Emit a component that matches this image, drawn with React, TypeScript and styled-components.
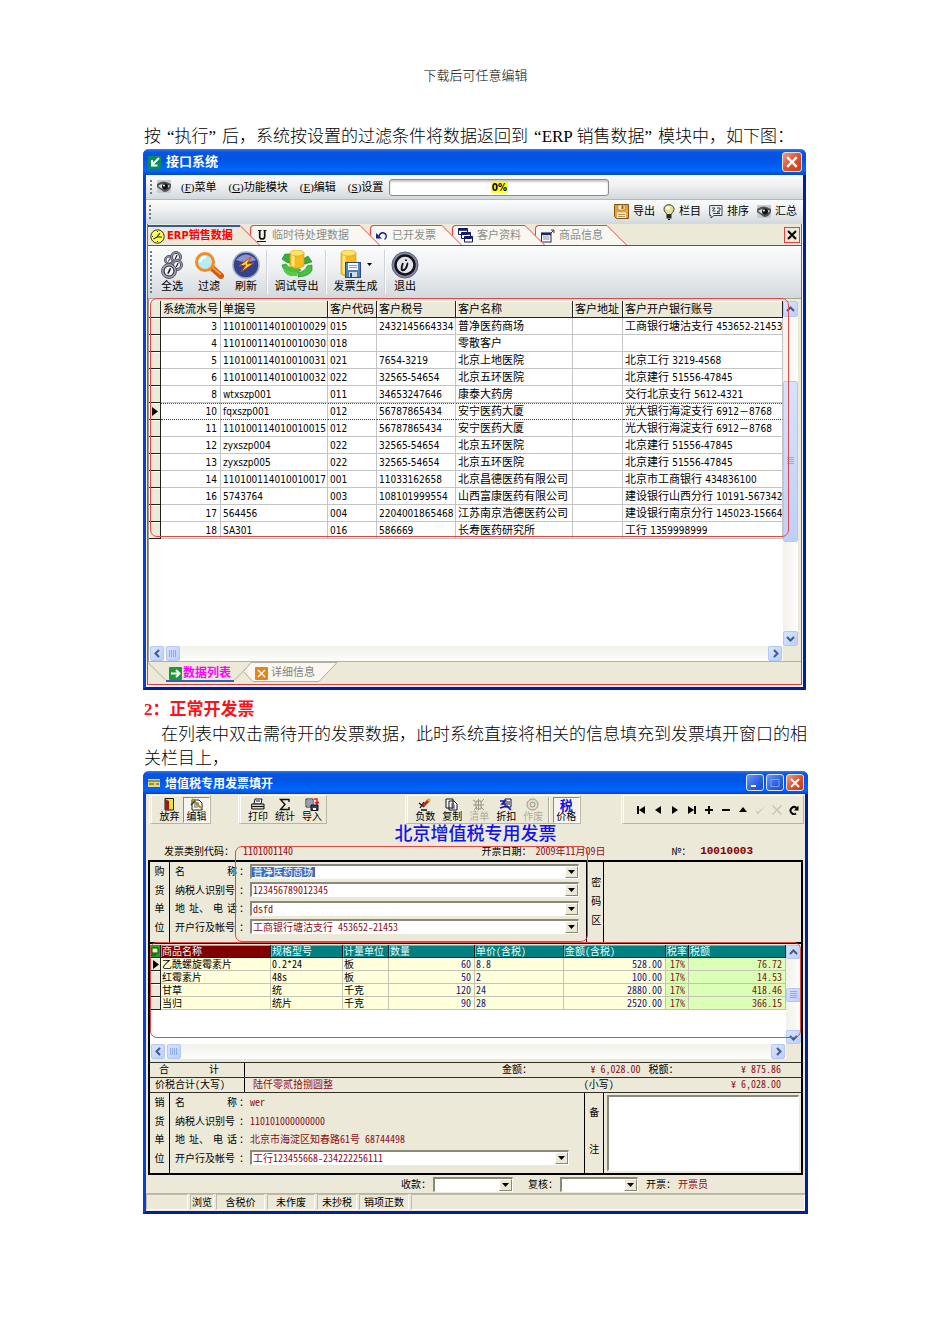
import React from 'react';
import styled, { createGlobalStyle, css } from 'styled-components';

const uiFont = '"DejaVu Sans Condensed", "Noto Sans CJK SC", sans-serif';
const formFont = '"Noto Sans CJK SC", sans-serif';

const GlobalStyle = createGlobalStyle`
  *, *::before, *::after { box-sizing: border-box; }
  body { margin: 0; background: #fff; color: #000; }
  button, select, textarea { font: inherit; color: inherit; margin: 0; padding: 0; border: 0; border-radius: 0; background: none; }
  svg { display: block; flex: none; }
`;

/* ---------- document ---------- */

const Page = styled.main`
  padding: 64px 142px 131px 143px;
  font-family: "Liberation Serif", "Noto Sans CJK SC", serif;
  font-size: 17px;
  line-height: 24px;
`;
const PageHeader = styled.header`
  text-align: center;
  font-size: 13px;
  font-weight: 300;
  margin-bottom: 37px;
`;
const Paragraph = styled.p<{ $indent?: boolean }>`
  margin: 0;
  padding-left: 1px;
  font-weight: 300;
  text-indent: ${p => (p.$indent ? '17px' : '0')};
`;
const OpenQuote = styled.span`
  padding-left: 6px;
`;
const CloseQuote = styled.span`
  padding-right: 6px;
`;
const Heading = styled.h2`
  margin: 8px 0 1px;
  padding-left: 1px;
  font-size: 17px;
  color: #f8141c;
`;

/* ---------- window frame ---------- */

const WindowFrame = styled.section<{ $narrow?: boolean }>`
  margin-right: ${p => (p.$narrow ? '2px' : '0')};
  border: solid #0a3fd0;
  border-width: 0 3px 3px;
  border-right-color: #0020a0;
  border-bottom-color: #0020a0;
  border-radius: 6px 6px 0 0;
  background: ${p => (p.$narrow ? '#f4f4fa' : '#ece9d8')};
  font-family: ${p => (p.$narrow ? uiFont : formFont)};
  font-size: ${p => (p.$narrow ? '11px' : '10px')};
  line-height: 14px;
  ${p => !p.$narrow && css`font-feature-settings: "hwid";`}
`;
const TitleBar = styled.div<{ $tall?: boolean }>`
  height: ${p => (p.$tall ? '26px' : '23px')};
  margin: 0 -3px;
  padding: 0 4px 0 5px;
  display: flex;
  align-items: center;
  gap: 5px;
  border-radius: 6px 6px 0 0;
  background: linear-gradient(#2f7df0 0, #0a55e0 12%, #0054e3 40%, #0066ff 82%, #0046c8 100%);
  color: #fff;
  font-size: ${p => (p.$tall ? '13px' : '12px')};
  font-weight: 700;
`;
const TitleText = styled.span`
  flex: 1;
`;
const CaptionButton = styled.button<{ $close?: boolean; $big?: boolean }>`
  width: ${p => (p.$big ? '20px' : '18px')};
  height: ${p => (p.$big ? '20px' : '17px')};
  margin-left: -3px;
  display: grid;
  place-items: center;
  border: 1px solid #dfe6fa;
  border-radius: 3px;
  background: ${p => (p.$close ? 'linear-gradient(135deg, #f0a088, #e0502c 50%, #c83c14)' : 'linear-gradient(135deg, #6c98f4, #2a5fe4 60%, #1c4ed0)')};
`;

const Cross = ({ size, color, width = 2 }: { size: number; color: string; width?: number }) => (
  <svg width={size} height={size} viewBox="0 0 10 10" stroke={color} strokeWidth={width} fill="none">
    <path d="M1 1L9 9M9 1L1 9" />
  </svg>
);

/* ---------- ERP window ---------- */

const silver = 'linear-gradient(#fbfcfc, #eef0f1 45%, #d2d9dd)';

const MenuBar = styled.nav`
  height: 25px;
  padding-left: 4px;
  display: flex;
  align-items: center;
  background: ${silver};
  border-bottom: 1px solid #b4b8ba;
`;
const MenuEye = styled.span`
  margin: 0 -2px 0 5px;
`;
const Grip = styled.span<{ $tall?: boolean }>`
  width: 2px;
  height: ${p => (p.$tall ? '42px' : '14px')};
  flex: none;
  background: repeating-linear-gradient(#707880 0 2px, transparent 2px 4px);
`;
const MenuItem = styled.button`
  margin-left: 12px;
  white-space: nowrap;
  font-family: "Liberation Serif", "Noto Sans CJK SC", serif;
`;
const Progress = styled.div`
  flex: 0 1 220px;
  height: 17px;
  margin-left: 6px;
  display: grid;
  place-items: center;
  border: 1px solid #8c8c8c;
  border-radius: 3px;
  background: #fff;
  box-shadow: inset 0 2px 2px #c8c8c8;
`;
const ProgressValue = styled.span`
  padding: 0 1px;
  line-height: 11px;
  font-size: 10px;
  font-weight: 700;
  background: #ffff30;
`;
const ActionBar = styled.div`
  height: 24px;
  padding: 0 6px 0 3px;
  display: flex;
  align-items: center;
  gap: 8px;
  background: ${silver};
  border-bottom: 1px solid #d8d8d0;
`;
const Spacer = styled.span`
  flex: 1;
`;
const ActionButton = styled.button`
  display: flex;
  align-items: center;
  gap: 4px;
  white-space: nowrap;
`;

const Panel = styled.div`
  margin: 0 1px 2px;
  border: solid #dc3c3c;
  border-width: 0 1px 1px;
  background: #ece9d8;
`;
const TabStrip = styled.div`
  height: 22px;
  padding: 1px 1px 0 0;
  display: flex;
  align-items: stretch;
  border-bottom: 1px solid #e02020;
`;
const Tab = styled.button<{ $width: number; $order: number; $active?: boolean }>`
  position: relative;
  z-index: ${p => p.$order};
  width: ${p => p.$width}px;
  margin-right: 10px;
  padding-left: ${p => (p.$active ? '2px' : '5px')};
  display: flex;
  align-items: center;
  gap: ${p => (p.$active ? '2px' : '4px')};
  white-space: nowrap;
  border: solid #f04040;
  border-width: ${p => (p.$active ? '2px 0 0 0' : '1px 0 0 1px')};
  border-top-color: ${p => (p.$active ? '#3458a8' : '#f04040')};
  border-radius: ${p => (p.$active ? '0' : '4px 0 0 0')};
  background: ${p => (p.$active ? '#ece9d8' : '#f8f7f2')};
  color: ${p => (p.$active ? '#f00' : '#8c8c88')};
  font-weight: ${p => (p.$active ? 700 : 400)};
`;
const TabSlope = styled.svg<{ $active?: boolean }>`
  position: absolute;
  left: 100%;
  top: ${p => (p.$active ? '-2px' : '-1px')};
`;
const CloseTab = styled.button`
  width: 16px;
  height: 16px;
  align-self: center;
  display: grid;
  place-items: center;
  border: 1px solid #e04040;
`;
const ToolRow = styled.div`
  height: 52px;
  padding-left: 2px;
  display: flex;
  align-items: center;
  background: ${silver};
`;
const ToolButton = styled.button<{ $width: number }>`
  width: ${p => p.$width}px;
  display: flex;
  flex-direction: column;
  align-items: center;
  gap: 1px;
  white-space: nowrap;
`;
const ToolSeparator = styled.span`
  width: 2px;
  height: 44px;
  background: #d0d4d8;
  border-right: 1px solid #fff;
`;
const IconLine = styled.span`
  display: flex;
  align-items: center;
  gap: 5px;
`;

const GridWrap = styled.div`
  position: relative;
  padding: 2px 3px 0 0;
  border-left: 1px solid #9c9a8c;
  border-top: 1px solid #a4a49c;
  border-bottom: 1px solid #b4b2a0;
`;
const Annotation = styled.span<{ $left: string; $right: string; $top: number; $height: number }>`
  position: absolute;
  z-index: 20;
  left: ${p => p.$left};
  right: ${p => p.$right};
  top: ${p => p.$top}px;
  height: ${p => p.$height}px;
  border: 1px solid #e04848;
  border-radius: 7px;
  pointer-events: none;
`;
const GridBody = styled.div<{ $height: number }>`
  display: flex;
  min-height: ${p => p.$height}px;
`;
const TableArea = styled.div`
  flex: 1;
  min-width: 0;
  background: #fff;
`;
const DataTable = styled.table`
  width: 100%;
  table-layout: fixed;
  border-collapse: separate;
  border-spacing: 0;
`;
const headFace = css`
  background: #ece9d8;
  border-right: 1px solid #202020;
  border-bottom: 1px solid #202020;
  box-shadow: inset 1px 1px 0 #fff;
`;
const HeadCell = styled.th`
  ${headFace}
  height: 17px;
  padding: 0 0 0 2px;
  line-height: 15px;
  font-weight: 400;
  text-align: left;
  white-space: nowrap;
`;
const Marker = styled.td`
  ${headFace}
  padding: 0 0 0 3px;
`;
const Cell = styled.td<{ $right?: boolean; $latin?: boolean; $current?: boolean }>`
  height: 17px;
  padding: ${p => (p.$right ? '0 3px 0 0' : '0 0 0 2px')};
  line-height: 15px;
  font-size: ${p => (p.$latin ? '10px' : '11px')};
  text-align: ${p => (p.$right ? 'right' : 'left')};
  white-space: nowrap;
  overflow: hidden;
  border-right: 1px solid #c4c4c4;
  border-bottom: 1px solid #c4c4c4;
  ${p => p.$current && css`
    border-bottom: 1px dotted #404040;
    background: repeating-linear-gradient(90deg, #505050 0 1px, #fff 1px 2px) top / 100% 1px no-repeat;
  `}
`;
const Digits = styled.span`
  font-size: 10px;
`;

/* ---------- scroll bars ---------- */

const VerticalTrack = styled.div<{ $rows: string }>`
  width: 15px;
  flex: none;
  display: grid;
  grid-template-rows: ${p => p.$rows};
  background: linear-gradient(90deg, #f2f1ea, #fdfdfb);
`;
const HorizontalTrack = styled.div`
  height: 15px;
  display: flex;
  gap: 2px;
  margin-right: 15px;
  padding: 0 1px;
  background: linear-gradient(#f2f1ea, #fdfdfb);
`;
const ScrollPart = styled.button`
  min-width: 14px;
  min-height: 14px;
  display: grid;
  place-items: center;
  border: 1px solid #b4c8f4;
  border-radius: 2px;
  background: linear-gradient(135deg, #d8e4fe, #bccffa);
`;
const arrowPaths = {
  up: 'M1 6L4.5 2.5L8 6',
  down: 'M1 3L4.5 6.5L8 3',
  left: 'M6 1L2.5 4.5L6 8',
  right: 'M3 1L6.5 4.5L3 8',
};
const ScrollArrow = ({ dir }: { dir: keyof typeof arrowPaths }) => (
  <ScrollPart aria-label={dir}>
    <svg width="9" height="9" viewBox="0 0 9 9" fill="none" stroke="#42598c" strokeWidth="2"><path d={arrowPaths[dir]} /></svg>
  </ScrollPart>
);
const Thumb = ({ vertical }: { vertical?: boolean }) => (
  <ScrollPart aria-label="scroll">
    <svg width="8" height="8" viewBox="0 0 8 8" stroke="#8caaf0">
      <path d={vertical ? 'M0 .5H7M0 2.5H7M0 4.5H7M0 6.5H7' : 'M.5 0V7M2.5 0V7M4.5 0V7M6.5 0V7'} />
    </svg>
  </ScrollPart>
);

const BottomTabs = styled.div`
  height: 22px;
  display: flex;
`;
const BottomTab = styled.button<{ $active?: boolean }>`
  position: relative;
  width: ${p => (p.$active ? '104px' : '96px')};
  margin-right: ${p => (p.$active ? '-9px' : '0')};
  padding-left: ${p => (p.$active ? '21px' : '12px')};
  display: flex;
  align-items: center;
  gap: ${p => (p.$active ? '1px' : '3px')};
  white-space: nowrap;
  color: ${p => (p.$active ? '#f0f' : '#84847c')};
  font-size: ${p => (p.$active ? '12px' : '11px')};
  font-weight: ${p => (p.$active ? 700 : 400)};
  & > * { position: relative; }
`;
const TabShape = styled.svg`
  && { position: absolute; left: 0; top: 0; }
`;

/* ---------- ERP icons ---------- */

const EyeIcon = () => (
  <svg width="14" height="14" viewBox="0 0 14 14">
    <rect width="14" height="13" fill="#c8ccd0" />
    <path d="M0 4Q6 -1 14 4V7Q12 12 7 12Q3 9 0 7Z" fill="#505458" />
    <path d="M1 6Q6 2 13 6Q8 11 4 8Z" fill="#d8dcdc" />
    <circle cx="8" cy="6.500" r="3" fill="#101010" />
    <circle cx="7" cy="5.500" r="1" fill="#fff" />
  </svg>
);
const FloppyIcon = () => (
  <svg width="15" height="15" viewBox="0 0 15 15">
    <path d="M.5 .5H14.500V14.500H2.500L.5 12.500Z" fill="#e8a438" stroke="#845010" />
    <rect x="4" y="1" width="7" height="5" fill="#fff4d0" stroke="#a06820" strokeWidth=".6" />
    <rect x="7.500" y="1.500" width="2" height="3.500" fill="#905c18" />
    <rect x="3" y="8.500" width="9" height="5.500" fill="#f8f4e8" />
    <path d="M4 10.500H11M4 12.500H11" stroke="#a89468" />
  </svg>
);
const BulbIcon = () => (
  <svg width="12" height="16" viewBox="0 0 12 16">
    <path d="M6 .7C2.500 .7 .8 3.200 1 5.500C1.200 8 3.500 8.500 3.700 10.500H8.300C8.500 8.500 10.800 8 11 5.500C11.200 3.200 9.500 .7 6 .7Z" fill="#e0e098" stroke="#404018" />
    <ellipse cx="5" cy="4" rx="2" ry="2" fill="#fffff0" />
    <rect x="3.500" y="10.500" width="5" height="4" fill="#282828" />
    <path d="M5 15.500H7" stroke="#000" />
  </svg>
);
const SortIcon = () => (
  <svg width="14" height="15" viewBox="0 0 14 15" fill="none" stroke="#38404c">
    <path d="M1.500 1.500H13V11.500H5L2 14V11.500H.7V1.500Z" fill="#e8f0f4" />
    <path d="M3 4H6L3.500 7H6.500M8 4H11V6L8 8H11M4 9.500H11" />
  </svg>
);
const ClockIcon = () => (
  <svg width="15" height="15" viewBox="0 0 15 15">
    <circle cx="7.500" cy="7.500" r="6.700" fill="#ffff50" stroke="#303030" />
    <path d="M3.500 10L7 8H12M7 8L10 4" fill="none" stroke="#282828" strokeWidth="1.200" />
    <path d="M7.500 2V3M2 7.500H3M7.500 12V13" stroke="#202020" />
  </svg>
);
const UnderlineIcon = () => (
  <svg width="12" height="14" viewBox="0 0 12 14" fill="none" stroke="#101010">
    <path d="M2 1.500H5.500M7.500 1.500H10.500M1 12.500H10" />
    <path d="M3.700 1V7.500C3.700 9.500 4.500 10 6 10C8 10 8.700 9.500 8.700 7.500V1" strokeWidth="1.700" />
  </svg>
);
const UndoIcon = () => (
  <svg width="12" height="12" viewBox="0 0 12 12">
    <path d="M3 6C4 3 6 2.500 8 3C11 4 11 8 8.500 9.500" fill="none" stroke="#102888" strokeWidth="1.400" />
    <path d="M0 3V8.500H6Z" fill="#102888" />
  </svg>
);
const CascadeIcon = () => (
  <svg width="15" height="15" viewBox="0 0 15 15" stroke="#101868" fill="#fff">
    <path d="M.5 .5H9.500V6.500H.5ZM3.500 4.500H12.500V10.500H3.500ZM6.500 8.500H14.500V14H6.500Z" />
    <path d="M.5 1.500H9.500M3.500 5.500H12.500M6.500 9.500H14.500" strokeWidth="2.400" />
  </svg>
);
const FormIcon = () => (
  <svg width="14" height="14" viewBox="0 0 14 14" fill="none">
    <rect x=".5" y="4" width="9.500" height="9" fill="#fff" stroke="#202860" />
    <path d="M.5 5H10" stroke="#202860" strokeWidth="2.400" />
    <path d="M2 8H8.500M2 10H8.500" stroke="#888" />
    <path d="M13 4V1H10M9 5L12.500 1.500" stroke="#801818" />
  </svg>
);
const GreenArrowIcon = ({ back }: { back?: boolean }) => (
  <svg width="13" height="13" viewBox="0 0 13 13" fill="none" stroke="#fff" strokeWidth="2">
    <rect width="13" height="13" rx="1" fill={back ? '#088c60' : '#209838'} stroke="none" />
    <path d={back ? 'M11 2L5 8M4 4V9.500H9.500' : 'M2 6.500H10M7 3L10.500 6.500L7 10'} />
  </svg>
);
const OrangeCrossIcon = () => (
  <svg width="13" height="13" viewBox="0 0 13 13">
    <rect width="13" height="13" rx="1" fill="#e48420" />
    <path d="M3 3L10 10M10 3L3 10" stroke="#fff4e0" strokeWidth="1.500" />
  </svg>
);

const Badge = ({ x, y, r }: { x: number; y: number; r: number }) => (
  <g transform={`translate(${x} ${y})`}>
    <circle r={r} fill="#a0a4b4" stroke="#50546c" />
    <circle r={r * 0.66} fill="#f4f4f8" stroke="#202028" strokeWidth={r * 0.14} />
    <path d={`M${-r * 0.15} ${r * 0.35}L${r * 0.2} ${-r * 0.35}`} stroke="#101018" strokeWidth={r * 0.2} />
  </g>
);
const SelectAllIcon = () => (
  <svg width="24" height="28" viewBox="0 0 24 28">
    <Badge x={9} y={9} r={4.500} /><Badge x={16} y={6} r={5.500} /><Badge x={17} y={14} r={5.500} /><Badge x={9} y={20} r={7.500} />
  </svg>
);
const SearchIcon = () => (
  <svg width="30" height="28" viewBox="0 0 30 28">
    <path d="M17 16L27 25" stroke="#d45810" strokeWidth="6" strokeLinecap="round" />
    <path d="M17 15L26 23" stroke="#fc9440" strokeWidth="2" strokeLinecap="round" />
    <circle cx="11" cy="11" r="8.500" fill="#b8ecf8" stroke="#f08c20" strokeWidth="3" />
    <path d="M6 11Q7 6 12 6" stroke="#fff" strokeWidth="2.500" fill="none" />
  </svg>
);
const RefreshIcon = () => (
  <svg width="28" height="28" viewBox="0 0 28 28">
    <circle cx="14" cy="14" r="13" fill="#34448c" stroke="#a4acc4" strokeWidth="1.500" />
    <path d="M4 9Q14 -2 24 9Q14 13 4 9Z" fill="#8898cc" />
    <path d="M19 6L7 15L14 14L9 21L22 12L15 13Z" fill="#ffdc28" stroke="#e03418" />
  </svg>
);
const Cylinder = ({ x, y, w, h }: { x: number; y: number; w: number; h: number }) => (
  <g>
    <path d={`M${x} ${y + 3}V${y + h - 3}Q${x + w / 2} ${y + h + 2} ${x + w} ${y + h - 3}V${y + 3}Z`} fill="#f4bc20" stroke="#d09410" strokeWidth=".6" />
    <path d={`M${x + 3} ${y + 5}V${y + h - 3}`} stroke="#ffe880" strokeWidth="3" />
    <ellipse cx={x + w / 2} cy={y + 3} rx={w / 2} ry="3" fill="#ffe468" stroke="#d8a018" strokeWidth=".6" />
  </g>
);
const DebugExportIcon = () => (
  <svg width="32" height="29" viewBox="0 0 32 29">
    <path d="M9 4H4L1 9L5 12Q17 17 31 12L27 6L22 9Q15 11 8 9Z" fill="#38b038" stroke="#188018" strokeWidth=".6" />
    <path d="M1 15Q2 22 12 23V26L20 20L12 15V18Q7 18 5 14ZM31 15V20Q29 26 17 27V23Q25 21 26 16Z" fill="#48c040" stroke="#188018" strokeWidth=".6" />
    <Cylinder x={9} y={0} w={14} h={19} />
    <path d="M2 18Q8 23 16 22V26L9 26Q3 24 2 18Z" fill="#58cc48" />
  </svg>
);
const InvoiceIcon = () => (
  <svg width="22" height="29" viewBox="0 0 22 29">
    <Cylinder x={1} y={0} w={15} h={27} />
    <rect x="5.500" y="12.500" width="15" height="15" fill="#5080b8" stroke="#284878" />
    <rect x="8" y="13" width="10" height="7" fill="#f4f8fc" />
    <path d="M9 15.500H17M9 17.500H17" stroke="#e09030" />
    <rect x="9" y="22" width="8" height="5" fill="#d4dce4" />
    <rect x="10" y="23" width="2" height="4" fill="#284878" />
  </svg>
);
const ExitIcon = () => (
  <svg width="28" height="28" viewBox="0 0 28 28">
    <circle cx="14" cy="14" r="13" fill="#84889c" stroke="#5c6080" />
    <circle cx="14" cy="14" r="9.500" fill="#e4e4ec" stroke="#14141c" strokeWidth="2.500" />
    <path d="M12 12Q10 17 11 19Q13 20 15 17Q17 13 16 12M15 8.500V10" fill="none" stroke="#14141c" strokeWidth="2" />
  </svg>
);

/* ---------- ERP data ---------- */

type SaleRow = [string, string, string, string, string, string, string];
const saleRows: SaleRow[] = [
  ['3', '110100114010010029', '015', '2432145664334', '普净医药商场', '工商银行塘沽支行', '453652-21453'],
  ['4', '110100114010010030', '018', '', '零散客户', '', ''],
  ['5', '110100114010010031', '021', '7654-3219', '北京上地医院', '北京工行', '3219-4568'],
  ['6', '110100114010010032', '022', '32565-54654', '北京五环医院', '北京建行', '51556-47845'],
  ['8', 'wtxszp001', '011', '34653247646', '康泰大药房', '交行北京支行', '5612-4321'],
  ['10', 'fqxszp001', '012', '56787865434', '安宁医药大厦', '光大银行海淀支行', '6912－8768'],
  ['11', '110100114010010015', '012', '56787865434', '安宁医药大厦', '光大银行海淀支行', '6912－8768'],
  ['12', 'zyxszp004', '022', '32565-54654', '北京五环医院', '北京建行', '51556-47845'],
  ['13', 'zyxszp005', '022', '32565-54654', '北京五环医院', '北京建行', '51556-47845'],
  ['14', '110100114010010017', '001', '11033162658', '北京昌德医药有限公司', '北京市工商银行', '434836100'],
  ['16', '5743764', '003', '108101999554', '山西富康医药有限公司', '建设银行山西分行', '10191-567342'],
  ['17', '564456', '004', '2204001865468', '江苏南京浩德医药公司', '建设银行南京分行', '145023-15664'],
  ['18', 'SA301', '016', '586669', '长寿医药研究所', '工行', '1359998999'],
];

const RowPointer = () => (
  <svg width="6" height="9" viewBox="0 0 6 9"><path d="M0 0L6 4.500L0 9Z" /></svg>
);

const pageTabs = [
  { label: 'ERP销售数据', width: 92, icon: <ClockIcon />, active: true },
  { label: '临时待处理数据', width: 110, icon: <UnderlineIcon /> },
  { label: '已开发票', width: 72, icon: <UndoIcon /> },
  { label: '客户资料', width: 73, icon: <CascadeIcon /> },
  { label: '商品信息', width: 72, icon: <FormIcon /> },
];

const menus = [['F', '菜单'], ['G', '功能模块'], ['E', '编辑'], ['S', '设置']];

const ErpWindow = () => (
  <WindowFrame $narrow>
    <TitleBar $tall>
      <GreenArrowIcon back />
      <TitleText>接口系统</TitleText>
      <CaptionButton $close $big aria-label="关闭"><Cross size={12} color="#fff" /></CaptionButton>
    </TitleBar>
    <MenuBar>
      <Grip />
      <MenuEye><EyeIcon /></MenuEye>
      {menus.map(([key, label]) => (
        <MenuItem key={key}>(<u>{key}</u>){label}</MenuItem>
      ))}
      <Progress role="progressbar" aria-valuenow={0}><ProgressValue>0%</ProgressValue></Progress>
    </MenuBar>
    <ActionBar>
      <Grip />
      <Spacer />
      <ActionButton><FloppyIcon />导出</ActionButton>
      <ActionButton><BulbIcon />栏目</ActionButton>
      <ActionButton><SortIcon />排序</ActionButton>
      <ActionButton><EyeIcon />汇总</ActionButton>
    </ActionBar>
    <Panel>
      <TabStrip>
        {pageTabs.map((tab, i) => (
          <Tab key={tab.label} $width={tab.width} $order={10 - i} $active={tab.active}>
            {tab.icon}
            {tab.label}
            <TabSlope $active={tab.active} width="21" height="20" viewBox="0 0 21 20">
              <path d="M0 0L20 20H0Z" fill={tab.active ? '#ece9d8' : '#f8f7f2'} />
              <path d="M0 .5L20 20.500" stroke="#f04040" />
            </TabSlope>
          </Tab>
        ))}
        <Spacer />
        <CloseTab aria-label="关闭标签"><Cross size={10} color="#000" /></CloseTab>
      </TabStrip>
      <ToolRow>
        <Grip $tall />
        <ToolButton $width={40}><SelectAllIcon />全选</ToolButton>
        <ToolButton $width={34}><SearchIcon />过滤</ToolButton>
        <ToolButton $width={40}><RefreshIcon />刷新</ToolButton>
        <ToolSeparator />
        <ToolButton $width={57}><DebugExportIcon />调试导出</ToolButton>
        <ToolSeparator />
        <ToolButton $width={57}>
          <IconLine>
            <InvoiceIcon />
            <svg width="5" height="3" viewBox="0 0 5 3"><path d="M0 0H5L2.500 3Z" /></svg>
          </IconLine>
          发票生成
        </ToolButton>
        <ToolSeparator />
        <ToolButton $width={38}><ExitIcon />退出</ToolButton>
      </ToolRow>
      <GridWrap>
        <GridBody $height={345}>
          <TableArea>
            <DataTable>
              <colgroup>
                <col width="12" /><col width="60" /><col width="107" /><col width="49" /><col width="79" /><col width="117" /><col width="50" /><col />
              </colgroup>
              <thead>
                <tr>
                  {['', '系统流水号', '单据号', '客户代码', '客户税号', '客户名称', '客户地址', '客户开户银行账号'].map(h => <HeadCell key={h}>{h}</HeadCell>)}
                </tr>
              </thead>
              <tbody>
                {saleRows.map(([id, doc, code, tax, name, bank, account]) => {
                  const current = id === '10';
                  return (
                    <tr key={id}>
                      <Marker>{current && <RowPointer />}</Marker>
                      <Cell $right $latin $current={current}>{id}</Cell>
                      <Cell $latin $current={current}>{doc}</Cell>
                      <Cell $latin $current={current}>{code}</Cell>
                      <Cell $latin $current={current}>{tax}</Cell>
                      <Cell $current={current}>{name}</Cell>
                      <Cell $current={current} />
                      <Cell $current={current}>{bank} <Digits>{account}</Digits></Cell>
                    </tr>
                  );
                })}
              </tbody>
            </DataTable>
          </TableArea>
          <VerticalTrack $rows="16px 64fr 160fr 89fr 15px">
            <ScrollArrow dir="up" />
            <span />
            <Thumb vertical />
            <span />
            <ScrollArrow dir="down" />
          </VerticalTrack>
        </GridBody>
        <HorizontalTrack>
          <ScrollArrow dir="left" />
          <Thumb />
          <Spacer />
          <ScrollArrow dir="right" />
        </HorizontalTrack>
        <Annotation $left="1px" $right="12px" $top={-1} $height={239} />
      </GridWrap>
      <BottomTabs>
        <BottomTab $active>
          <TabShape width="104" height="21" viewBox="0 0 104 21">
            <path d="M0 .5L18 18.500H86L104 .5" fill="#ece9d8" stroke="#b0ae9c" />
            <rect x="18" y="18" width="68" height="2" fill="#3060b8" />
          </TabShape>
          <GreenArrowIcon />
          <span>数据列表</span>
        </BottomTab>
        <BottomTab>
          <TabShape width="96" height="21" viewBox="0 0 96 21">
            <path d="M8 .5L.5 9.500L10 19.500H76L94 .5Z" fill="#f8f7f0" stroke="#b0ae9c" />
          </TabShape>
          <OrangeCrossIcon />
          <span>详细信息</span>
        </BottomTab>
      </BottomTabs>
    </Panel>
  </WindowFrame>
);

/* ---------- invoice window ---------- */

const FormTools = styled.div`
  height: 30px;
  padding: 1px 1px 0 3px;
  display: flex;
  justify-content: space-between;
`;
const FormGroup = styled.div<{ $end?: boolean }>`
  height: 29px;
  padding: ${p => (p.$end ? '1px 1px 0 8px' : '1px 0 0 4px')};
  display: flex;
  align-items: stretch;
  border: 1px solid #b8b4a0;
  border-top-color: #fff;
  border-left: 3px double #fff;
`;
const FormButton = styled.button<{ $pressed?: boolean; $disabled?: boolean }>`
  width: 27px;
  display: flex;
  flex-direction: column;
  align-items: center;
  justify-content: flex-start;
  line-height: 10px;
  white-space: nowrap;
  color: ${p => (p.$disabled ? '#b0ad9c' : '#000')};
  border: 1px solid ${p => (p.$pressed ? '#fff' : 'transparent')};
  ${p => p.$pressed && css`background: #f6f4ec; border-top-color: #908c7c; border-left-color: #908c7c;`}
`;
const FormSeparator = styled.span`
  width: 2px;
  margin: 0 3px 0 1px;
  background: #b0ac9c;
  border-right: 1px solid #fff;
`;
const NavButton = styled.button`
  width: 17px;
  display: grid;
  place-items: center;
`;
const InvoiceTitle = styled.h3`
  margin: 0;
  height: 17px;
  line-height: 16px;
  text-align: center;
  font-size: 18px;
  font-weight: 500;
  color: #1414e8;
`;
const InfoRow = styled.div`
  height: 19px;
  padding: 0 52px 0 18px;
  display: grid;
  grid-template-columns: 318fr 190fr auto;
  align-items: center;
  line-height: 12px;
`;
const InfoItem = styled.span<{ $tight?: boolean }>`
  display: flex;
  gap: ${p => (p.$tight ? '4px' : '9px')};
  white-space: nowrap;
`;
const Value = styled.span`
  color: #8c0c18;
`;
const InvoiceNumber = styled.strong`
  font-family: "Liberation Mono", monospace;
  font-size: 11px;
  color: #800000;
`;
const Sheet = styled.div`
  position: relative;
  margin: 0 2px;
  border: 2px solid #000;
`;
const Party = styled.div<{ $columns: string }>`
  height: 80px;
  display: grid;
  grid-template-columns: ${p => p.$columns};
`;
const SideTitle = styled.div<{ $leftLine?: boolean }>`
  display: flex;
  flex-direction: column;
  align-items: center;
  justify-content: space-around;
  padding: 0 0 6px;
  border-right: 1px solid #000;
  ${p => p.$leftLine && css`border-left: 1px solid #000;`}
`;
const CipherTitle = styled(SideTitle)`
  padding: 10px 0 12px 2px;
`;
const Fields = styled.div`
  display: grid;
  grid-template-rows: repeat(4, 1fr);
  padding: 0 7px 6px 5px;
`;
const FieldRow = styled.div`
  display: flex;
  align-items: center;
`;
const FieldLabel = styled.label`
  width: 62px;
  display: flex;
  justify-content: space-between;
  white-space: nowrap;
`;
const Colon = styled.span`
  width: 13px;
  padding-left: 2px;
`;
const ComboBox = styled.div<{ $width?: number }>`
  position: relative;
  ${p => (p.$width ? css`width: ${p.$width}px;` : css`flex: 1;`)}
  height: 15px;
  background: #fff;
  border: 1px solid #fff;
  border-top: 2px solid #8c8878;
  border-left: 2px solid #8c8878;
`;
const Select = styled.select<{ $selected?: boolean }>`
  appearance: none;
  display: block;
  width: 100%;
  height: 12px;
  padding: 0 14px 0 1px;
  line-height: 12px;
  outline: 0;
  color: ${p => (p.$selected ? '#fff' : '#8c0c18')};
  ${p => p.$selected && css`background: linear-gradient(#3c6cc0, #3c6cc0) 0 1px / 63px 10px no-repeat;`}
`;
const DropArrow = styled.span`
  position: absolute;
  top: 0;
  right: 0;
  width: 13px;
  height: 12px;
  display: grid;
  place-items: center;
  pointer-events: none;
  background: #ece9d8;
  border: 1px solid #8c8878;
  border-top-color: #fff;
  border-left-color: #fff;
`;
const ItemsWrap = styled.div`
  position: relative;
  border-top: 2px solid #000;
  padding: 1px 0 3px;
`;
const ItemHead = styled.th<{ $first?: boolean }>`
  height: 13px;
  padding: 0 0 0 1px;
  line-height: 12px;
  font-weight: 400;
  text-align: left;
  white-space: nowrap;
  color: #e8ffff;
  background: ${p => (p.$first ? '#800000' : '#008080')};
  border-right: 1px solid #202020;
  border-bottom: 1px solid #202020;
  box-shadow: inset 1px 1px 0 #70b0b0;
`;
const CornerHead = styled.th`
  padding: 0;
  background: #20a028;
  border-right: 1px solid #202020;
  border-bottom: 1px solid #202020;
`;
const ItemCell = styled.td<{ $tone?: 'number' | 'tax'; $right?: boolean }>`
  height: 13px;
  padding: 0 3px 0 1px;
  line-height: 12px;
  white-space: nowrap;
  text-align: ${p => (p.$right ? 'right' : 'left')};
  color: ${p => (p.$tone === 'number' ? '#14147c' : p.$tone === 'tax' ? '#801410' : '#000')};
  background: ${p => (p.$tone === 'tax' ? '#dcffb8' : '#ffffdc')};
  border-right: 1px solid #c4c4b4;
  border-bottom: 1px solid #c4c4b4;
`;
const TotalRow = styled.div`
  height: 15px;
  display: grid;
  grid-template-columns: 95px 250fr 82fr 65fr 141fr 20px;
  align-items: stretch;
  line-height: 12px;
  white-space: nowrap;
  border-top: 1px solid #303028;
`;
const TotalLabel = styled.span<{ $spread?: boolean }>`
  padding: 0 ${p => (p.$spread ? '25px' : '0')} 0 ${p => (p.$spread ? '9px' : '5px')};
  display: flex;
  justify-content: ${p => (p.$spread ? 'space-between' : 'flex-start')};
  border-right: 1px solid #000;
`;
const TotalCell = styled.span<{ $red?: boolean; $right?: boolean }>`
  padding-left: 8px;
  text-align: ${p => (p.$right ? 'right' : 'left')};
  color: ${p => (p.$red ? '#8c0c18' : '#000')};
`;
const TaxTotal = styled(TotalCell)`
  display: flex;
  justify-content: space-between;
`;
const TaxLabel = styled.span`
  color: #000;
`;
const SellerParty = styled(Party)`
  height: 81px;
  border-top: 1px solid #303028;
`;
const SellerFields = styled(Fields)`
  padding-right: 15px;
`;
const NotesCell = styled.div`
  padding: 2px 2px 2px 3px;
  display: flex;
`;
const Notes = styled.textarea`
  flex: 1;
  min-width: 0;
  resize: none;
  background: #fff;
  border: 1px solid #fff;
  border-top: 2px solid #8c8878;
  border-left: 2px solid #8c8878;
`;
const SignRow = styled.div`
  height: 18px;
  padding-left: 255px;
  display: flex;
  align-items: center;
  line-height: 12px;
  white-space: nowrap;
`;
const SignLabel = styled.label<{ $gap?: boolean }>`
  margin-left: ${p => (p.$gap ? '15px' : '0')};
  width: 32px;
`;
const SignText = styled.span`
  margin-left: 8px;
  width: 32px;
`;
const StatusBar = styled.footer`
  height: 18px;
  display: flex;
  gap: 2px;
  padding-bottom: 1px;
  border-top: 1px solid #b8b4a4;
`;
const StatusCell = styled.span<{ $width?: number }>`
  ${p => (p.$width ? css`width: ${p.$width}px;` : css`flex: 1;`)}
  line-height: 13px;
  text-align: center;
  white-space: nowrap;
  border: 1px solid #fff;
  border-top-color: #c0bcac;
  border-left-color: #c0bcac;
`;

const Combo = ({ id, text = '', selected, width }: { id: string; text?: string; selected?: boolean; width?: number }) => (
  <ComboBox $width={width}>
    <Select id={id} $selected={selected}><option>{text}</option></Select>
    <DropArrow><svg width="7" height="4" viewBox="0 0 7 4"><path d="M0 0H7L3.500 4Z" /></svg></DropArrow>
  </ComboBox>
);

const Field = ({ id, label, children }: { id: string; label: string[]; children: React.ReactNode }) => (
  <FieldRow>
    <FieldLabel htmlFor={id}>{label.map(part => <span key={part}>{part}</span>)}</FieldLabel>
    <Colon>：</Colon>
    {children}
  </FieldRow>
);

/* ---------- invoice icons ---------- */

const smallIcons: Record<string, React.ReactNode> = {
  door: <><path d="M2 .5H10.500V12H2Z" fill="#f4e428" stroke="#181818" /><path d="M2 1L6 3V12.500L2 12Z" fill="#a01818" /></>,
  edit: <><path d="M2 2H9L12 5V12H2Z" fill="#fff" stroke="#202020" /><path d="M4 5H9M4 7H9M4 9H8" stroke="#405880" /><path d="M2 1L11 10" stroke="#a89020" strokeWidth="2" /><path d="M1 7L5 3" stroke="#184818" strokeWidth="1.500" /></>,
  print: <><path d="M4 1H11L10 6H3Z" fill="#fff" stroke="#101010" /><path d="M.7 6H13V11H.7Z" fill="#d8d4c4" stroke="#101010" /><path d="M1 8.500H13M5 3H9" stroke="#101010" /></>,
  sum: <path d="M11 4V1.500H2.500L7 6.500L2.500 11.500H11V9" fill="none" stroke="#101010" strokeWidth="1.400" />,
  load: <><path d="M1 1H8V9H1Z" fill="#fff" stroke="#202020" /><path d="M2 3H7M2 5H7M2 7H7" stroke="#304070" /><path d="M9 1H12V5M10 4L12 6L14 4" fill="none" stroke="#e02020" strokeWidth="1.500" /><path d="M6 7H13V12.500H6Z" fill="#304070" stroke="#101010" /><path d="M8 10H11V12H8Z" fill="#fff" /></>,
  minus: <><path d="M1 5L6 9M2 10L6 4M3 12H9" stroke="#101010" strokeWidth="1.300" /><path d="M5 8L11 2" stroke="#c02818" strokeWidth="3" /><path d="M10 3L12 1" stroke="#e0b020" strokeWidth="2.500" /></>,
  copy: <><path d="M1 1H8V10H1ZM4 3H9L12 6V12H4Z" fill="#fff" stroke="#101010" /><path d="M6 6H9M6 8H10M6 10H10" stroke="#304080" /></>,
  list: <path d="M1 2L4 4M12 1L9 4M1 7H12M2 12L5 9M12 12L9 9M4 3H9V11H4ZM6.500 1V12" fill="none" stroke="#989484" />,
  discount: <><path d="M6 1H12V9H6Z" fill="#fff" stroke="#101030" /><path d="M8 3V7M10 3V7" stroke="#101030" /><path d="M1 3H6L3 6H7M1 10L8 8L12 12" fill="none" stroke="#1818a0" strokeWidth="1.600" /></>,
  void: <><circle cx="6.500" cy="6.500" r="5.500" fill="#e4e0d0" stroke="#989484" /><circle cx="6.500" cy="6.500" r="2.500" fill="none" stroke="#989484" /></>,
};
const SmallIcon = ({ name }: { name: string }) => (
  <svg width="14" height="13" viewBox="0 0 14 13">{smallIcons[name]}</svg>
);
const TaxGlyph = styled.b`
  height: 13px;
  line-height: 13px;
  font-size: 13px;
  color: #1010e8;
`;
const navPaths: [string, string, boolean?][] = [
  ['首条', 'M1 1H3V9H1ZM9 1V9L3 5Z'],
  ['上一条', 'M8 1V9L2 5Z'],
  ['下一条', 'M2 1V9L8 5Z'],
  ['末条', 'M7 1H9V9H7ZM1 1V9L7 5Z'],
  ['增加', 'M4 1H6V4H9V6H6V9H4V6H1V4H4Z'],
  ['删除', 'M1 4H9V6H1Z'],
  ['编辑记录', 'M5 2L9 7H1Z'],
  ['保存', 'M0 6L3 9L10 1L3 7Z', true],
  ['取消', 'M1 0L5 4L9 0L10 1L6 5L10 9L9 10L5 6L1 10L0 9L4 5L0 1Z', true],
];

const toolGroups: { label: string; icon: string; disabled?: boolean; pressed?: boolean }[][] = [
  [{ label: '放弃', icon: 'door' }, { label: '编辑', icon: 'edit', pressed: true }],
  [{ label: '打印', icon: 'print' }, { label: '统计', icon: 'sum' }, { label: '导入', icon: 'load' }],
  [
    { label: '负数', icon: 'minus' }, { label: '复制', icon: 'copy' }, { label: '清单', icon: 'list', disabled: true },
    { label: '折扣', icon: 'discount' }, { label: '作废', icon: 'void', disabled: true },
  ],
];
const GroupSlot = styled.div<{ $share: number }>`
  flex: ${p => p.$share} 0 auto;
  width: 0;
  display: flex;
`;
const slotShares = [90, 170, 220];

const items = [
  ['乙酰螺旋霉素片', '0.2*24', '板', '60', '8.8', '528.00', '76.72'],
  ['红霉素片', '48s', '板', '50', '2', '100.00', '14.53'],
  ['甘草', '统', '千克', '120', '24', '2880.00', '418.46'],
  ['当归', '统片', '千克', '90', '28', '2520.00', '366.15'],
];

const nameLabel = ['名', '称'];
const addressLabel = ['地', '址、', '电', '话'];

const InvoiceWindow = () => (
  <WindowFrame>
    <TitleBar>
      <svg width="12" height="8" viewBox="0 0 12 8"><rect width="12" height="8" fill="#e8d878" /><path d="M0 2H12M1 5H6M8 5H11" stroke="#304830" /></svg>
      <TitleText>增值税专用发票填开</TitleText>
      <CaptionButton aria-label="最小化"><svg width="10" height="10" viewBox="0 0 10 10"><path d="M1 7H6V9H1Z" fill="#fff" /></svg></CaptionButton>
      <CaptionButton aria-label="最大化"><svg width="10" height="10" viewBox="0 0 10 10"><path d="M1 1.500H9V8.500H1Z" fill="none" stroke="#7ca0f4" /></svg></CaptionButton>
      <CaptionButton $close aria-label="关闭"><Cross size={10} color="#fff" /></CaptionButton>
    </TitleBar>
    <FormTools>
      {toolGroups.map((group, g) => (
        <GroupSlot key={g} $share={slotShares[g]}>
          <FormGroup>
            {group.map(tool => (
              <FormButton key={tool.label} $pressed={tool.pressed} $disabled={tool.disabled}>
                <SmallIcon name={tool.icon} />
                {tool.label}
              </FormButton>
            ))}
            {g === 2 && <><FormSeparator /><FormButton $pressed><TaxGlyph>税</TaxGlyph>价格</FormButton></>}
          </FormGroup>
        </GroupSlot>
      ))}
      <FormGroup $end>
        {navPaths.map(([label, d, disabled]) => (
          <NavButton key={label} aria-label={label}>
            <svg width="10" height="10" viewBox="0 0 10 10"><path d={d} fill={disabled ? '#c8c4b4' : '#000'} /></svg>
          </NavButton>
        ))}
        <NavButton aria-label="刷新">
          <svg width="10" height="10" viewBox="0 0 10 10"><path d="M7 8.500A3.500 3.500 0 1 1 7.500 3" fill="none" stroke="#000" strokeWidth="2" /><path d="M9.500 .5V5.500H5Z" /></svg>
        </NavButton>
      </FormGroup>
    </FormTools>
    <InvoiceTitle>北京增值税专用发票</InvoiceTitle>
    <InfoRow>
      <InfoItem><span>发票类别代码：</span><Value>1101001140</Value></InfoItem>
      <InfoItem $tight><span>开票日期：</span><Value>2009年11月09日</Value></InfoItem>
      <InfoItem><span>№：</span><InvoiceNumber>10010003</InvoiceNumber></InfoItem>
    </InfoRow>
    <Sheet>
      <Party $columns="20px 417fr 18px 197fr">
        <SideTitle><span>购</span><span>货</span><span>单</span><span>位</span></SideTitle>
        <Fields>
          <Field id="buyer-name" label={nameLabel}><Combo id="buyer-name" text="普净医药商场" selected /></Field>
          <Field id="buyer-tax" label={['纳税人识别号']}><Combo id="buyer-tax" text="123456789012345" /></Field>
          <Field id="buyer-address" label={addressLabel}><Combo id="buyer-address" text="dsfd" /></Field>
          <Field id="buyer-bank" label={['开户行及帐号']}><Combo id="buyer-bank" text="工商银行塘沽支行 453652-21453" /></Field>
        </Fields>
        <CipherTitle $leftLine><span>密</span><span>码</span><span>区</span></CipherTitle>
        <span />
      </Party>
      <ItemsWrap>
        <GridBody $height={99}>
          <TableArea>
            <DataTable>
              <colgroup>
                <col width="11" /><col width="110" /><col width="72" /><col width="46" /><col width="86" /><col width="89" /><col width="102" /><col width="23" /><col />
              </colgroup>
              <thead>
                <tr>
                  <CornerHead><svg width="10" height="11" viewBox="0 0 10 11"><path d="M2 2H8V7H2ZM1 9H6" fill="#e8f4a0" stroke="#084810" /></svg></CornerHead>
                  {['商品名称', '规格型号', '计量单位', '数量', '单价(含税)', '金额(含税)', '税率', '税额'].map((h, i) => <ItemHead key={h} $first={i === 0}>{h}</ItemHead>)}
                </tr>
              </thead>
              <tbody>
                {items.map(([name, spec, unit, count, price, sum, tax], i) => (
                  <tr key={name}>
                    <Marker>{i === 0 && <RowPointer />}</Marker>
                    <ItemCell>{name}</ItemCell>
                    <ItemCell>{spec}</ItemCell>
                    <ItemCell>{unit}</ItemCell>
                    <ItemCell $tone="number" $right>{count}</ItemCell>
                    <ItemCell $tone="number">{price}</ItemCell>
                    <ItemCell $tone="number" $right>{sum}</ItemCell>
                    <ItemCell $tone="tax" $right>17%</ItemCell>
                    <ItemCell $tone="tax" $right>{tax}</ItemCell>
                  </tr>
                ))}
              </tbody>
            </DataTable>
          </TableArea>
          <VerticalTrack $rows="14px 28fr 14px 28fr 14px">
            <ScrollArrow dir="up" />
            <span />
            <Thumb vertical />
            <span />
            <ScrollArrow dir="down" />
          </VerticalTrack>
        </GridBody>
        <HorizontalTrack>
          <ScrollArrow dir="left" />
          <Thumb />
          <Spacer />
          <ScrollArrow dir="right" />
        </HorizontalTrack>
        <Annotation $left="0" $right="0" $top={-2} $height={96} />
      </ItemsWrap>
      <TotalRow>
        <TotalLabel $spread><span>合</span><span>计</span></TotalLabel>
        <TotalCell />
        <TotalCell>金额：</TotalCell>
        <TotalCell $red $right>¥ 6,028.00</TotalCell>
        <TaxTotal $red><TaxLabel>税额：</TaxLabel>¥ 875.86</TaxTotal>
        <span />
      </TotalRow>
      <TotalRow>
        <TotalLabel>价税合计(大写)</TotalLabel>
        <TotalCell $red>陆仟零贰拾捌圆整</TotalCell>
        <TotalCell />
        <TotalCell>(小写)</TotalCell>
        <TotalCell $red $right>¥ 6,028.00</TotalCell>
        <span />
      </TotalRow>
      <SellerParty $columns="20px 415fr 20px 197fr">
        <SideTitle><span>销</span><span>货</span><span>单</span><span>位</span></SideTitle>
        <SellerFields>
          <Field id="seller-name" label={nameLabel}><Value id="seller-name">wer</Value></Field>
          <Field id="seller-tax" label={['纳税人识别号']}><Value id="seller-tax">110101000000000</Value></Field>
          <Field id="seller-address" label={addressLabel}><Value id="seller-address">北京市海淀区知春路61号 68744498</Value></Field>
          <Field id="seller-bank" label={['开户行及帐号']}><Combo id="seller-bank" text="工行123455668-234222256111" /></Field>
        </SellerFields>
        <SideTitle $leftLine><span>备</span><span>注</span></SideTitle>
        <NotesCell><Notes aria-label="备注" /></NotesCell>
      </SellerParty>
      <Annotation $left="85px" $right="213px" $top={-16} $height={96} />
    </Sheet>
    <SignRow>
      <SignLabel htmlFor="cashier">收款：</SignLabel><Combo id="cashier" width={80} />
      <SignLabel $gap htmlFor="checker">复核：</SignLabel><Combo id="checker" width={78} />
      <SignText>开票：</SignText><Value>开票员</Value>
    </SignRow>
    <StatusBar>
      <StatusCell $width={42} />
      <StatusCell $width={24}>浏览</StatusCell>
      <StatusCell $width={49}>含税价</StatusCell>
      <StatusCell $width={48}>未作废</StatusCell>
      <StatusCell $width={40}>未抄税</StatusCell>
      <StatusCell $width={50}>销项正数</StatusCell>
      <StatusCell />
    </StatusBar>
  </WindowFrame>
);

export default function App() {
  return (
    <>
      <GlobalStyle />
      <Page lang="zh-CN">
        <PageHeader>下载后可任意编辑</PageHeader>
        <Paragraph>
          按<OpenQuote>“</OpenQuote>执行<CloseQuote>”</CloseQuote>后，系统按设置的过滤条件将数据返回到<OpenQuote>“</OpenQuote>ERP 销售数据<CloseQuote>”</CloseQuote>模块中，如下图：
        </Paragraph>
        <ErpWindow />
        <Heading>2：正常开发票</Heading>
        <Paragraph $indent>
          在列表中双击需待开的发票数据，此时系统直接将相关的信息填充到发票填开窗口的相关栏目上，
        </Paragraph>
        <InvoiceWindow />
      </Page>
    </>
  );
}
